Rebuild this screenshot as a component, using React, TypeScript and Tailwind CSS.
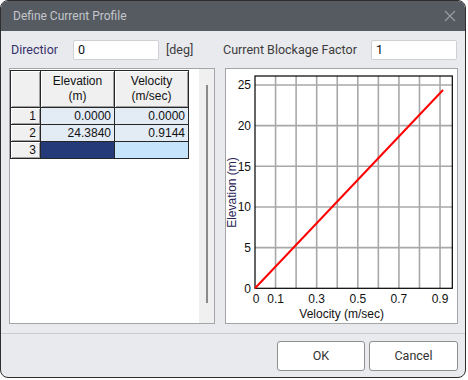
import React from "react";

const X0 = 29; // svg x for value 0
const XS = 205.6; // px per unit
const Y0 = 219.3;
const YS = 8.132;

function Chart() {
  const vgrid = [1, 2, 3, 4, 5, 6, 7, 8, 9].map((k) => X0 + XS * 0.1 * k);
  const hgrid = [5, 10, 15, 20, 25].map((v) => Y0 - YS * v);
  const xl = [
    { t: "0", v: 0 },
    { t: "0.1", v: 0.1 },
    { t: "0.3", v: 0.3 },
    { t: "0.5", v: 0.5 },
    { t: "0.7", v: 0.7 },
    { t: "0.9", v: 0.9 },
  ];
  const yl = [0, 5, 10, 15, 20, 25];
  return (
    <svg width="231" height="254" viewBox="0 0 231 254" className="block">
      <rect x={X0} y={7} width={197.3} height={212.3} fill="#ffffff" />
      {vgrid.map((x, i) => (
        <line key={"v" + i} x1={x} y1={7} x2={x} y2={219.3} stroke="#a8a8a8" strokeWidth={1.6} />
      ))}
      {hgrid.map((y, i) => (
        <line key={"h" + i} x1={X0} y1={y} x2={226.3} y2={y} stroke="#a8a8a8" strokeWidth={1.6} />
      ))}
      <rect x={X0} y={7} width={197.3} height={212.3} fill="none" stroke="#000" strokeWidth={1.2} />
      <line
        x1={X0}
        y1={Y0}
        x2={X0 + XS * 0.9144}
        y2={Y0 - YS * 24.384}
        stroke="#ff0000"
        strokeWidth={2}
      />
      <g fontFamily="'Liberation Sans', Arial, sans-serif" fontSize="12" fill="#111">
        {yl.map((v) => (
          <text key={"y" + v} x={25} y={Y0 - YS * v + 4.3} textAnchor="end">
            {v}
          </text>
        ))}
        {xl.map((l) => (
          <text key={"x" + l.t} x={X0 + XS * l.v + (l.v === 0 ? 1 : 0)} y={233.5} textAnchor="middle">
            {l.t}
          </text>
        ))}
        <text x={115.7} y={249} textAnchor="middle">
          Velocity (m/sec)
        </text>
        <text
          x={0}
          y={0}
          textAnchor="middle"
          fill="#2a2356"
          transform="translate(9.5 123.5) rotate(-90)"
        >
          Elevation (m)
        </text>
      </g>
    </svg>
  );
}

function HeadCell({ children, right }: { children: React.ReactNode; right?: boolean }) {
  return (
    <div
      className={
        "bg-[#f0f0f0] border-r border-b border-[#262626] shadow-[inset_1px_1px_0_#ffffff,inset_-1px_-1px_0_#a0a0a0] flex " +
        (right ? "items-center justify-end pr-[4px]" : "flex-col items-center justify-center leading-[15px]")
      }
    >
      {children}
    </div>
  );
}

function DataCell({ children, bg }: { children?: React.ReactNode; bg: string }) {
  return (
    <div className={"border-r border-b border-[#262626] flex items-center justify-end pr-[3px] " + bg}>{children}</div>
  );
}

function Grid() {
  return (
    <div className="mt-[1px] ml-0 grid grid-cols-[30px_74px_74px] grid-rows-[37px_17px_17px_17px] border-l border-t border-[#262626] w-[179px] font-['Liberation_Sans',Arial,sans-serif] text-[12px] text-[#111]">
      <HeadCell> </HeadCell>
      <HeadCell>
        <span>Elevation</span>
        <span>(m)</span>
      </HeadCell>
      <HeadCell>
        <span>Velocity</span>
        <span>(m/sec)</span>
      </HeadCell>
      <HeadCell right>1</HeadCell>
      <DataCell bg="bg-[#e3ebf5]">0.0000</DataCell>
      <DataCell bg="bg-[#e3ebf5]">0.0000</DataCell>
      <HeadCell right>2</HeadCell>
      <DataCell bg="bg-[#e3ebf5]">24.3840</DataCell>
      <DataCell bg="bg-[#e3ebf5]">0.9144</DataCell>
      <HeadCell right>3</HeadCell>
      <DataCell bg="bg-[#253a78]" />
      <DataCell bg="bg-[#c6e4fc]" />
    </div>
  );
}

export default function App() {
  return (
    <div className="w-[468px] h-[380px] bg-white">
      <div className="w-[466px] h-[378px] border border-[#2e2e2e] rounded-[8px] overflow-hidden bg-[#e9eaee] flex flex-col font-['Roboto',sans-serif]">
        {/* title bar */}
        <div className="h-[30px] shrink-0 bg-[#565b62] flex items-center justify-between pl-[12px] pr-[9px]">
          <span className="text-[12px] text-[#c3c6cb] leading-none">Define Current Profile</span>
          <svg width="12" height="12" viewBox="0 0 12 12">
            <path d="M1 1 L11 11 M11 1 L1 11" stroke="#9a9ea4" strokeWidth="1.1" fill="none" />
          </svg>
        </div>

        {/* parameters row */}
        <div className="mt-[9px] h-[20px] flex items-center text-[12.5px]">
          <div className="ml-[10px] w-[47px] overflow-hidden whitespace-nowrap text-[#35306a]">Direction</div>
          <div className="ml-[15px] w-[86px] h-[20px] bg-white border border-[#cfd0d4] rounded-[2px] flex items-center pl-[4px] text-[#111]">
            0
          </div>
          <div className="ml-[7px] w-[50px] text-[#3c3c3c]">[deg]</div>
          <div className="ml-[7px] w-[148px] text-[#3c3c3c] whitespace-nowrap">Current Blockage Factor</div>
          <div className="w-[86px] h-[20px] bg-white border border-[#cfd0d4] rounded-[2px] flex items-center pl-[4px] text-[#111]">
            1
          </div>
        </div>

        {/* panels */}
        <div className="mt-[8px] ml-[8px] flex gap-[10px] h-[256px]">
          <div className="w-[206px] h-[256px] border border-[#a4a5a8] flex">
            <div className="flex-1 bg-white">
              <Grid />
            </div>
            <div className="w-[15px] bg-[#f0f0f0] pt-[16px] flex justify-center">
              <div className="w-[2px] h-[218px] bg-[#8a8a8a]" />
            </div>
          </div>
          <div className="w-[233px] h-[256px] border border-[#a4a5a8] bg-white">
            <Chart />
          </div>
        </div>

        {/* separator */}
        <div className="mt-[9px] h-[1px] bg-[#cbccd0]" />

        {/* buttons */}
        <div className="mt-[7px] flex justify-end gap-[4px] pr-[7px] text-[12.5px] text-[#333]">
          <button className="w-[88px] h-[30px] bg-white border border-[#8e8e8e] rounded-[3px] flex items-center justify-center">
            OK
          </button>
          <button className="w-[89px] h-[30px] bg-white border border-[#8e8e8e] rounded-[3px] flex items-center justify-center">
            Cancel
          </button>
        </div>
      </div>
    </div>
  );
}
